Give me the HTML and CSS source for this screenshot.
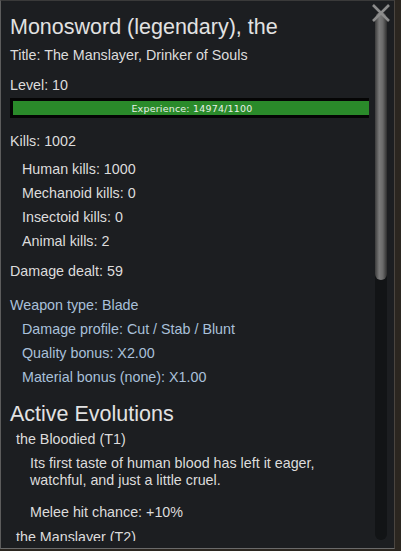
FILE: index.html
```html
<!DOCTYPE html>
<html>
<head>
<meta charset="utf-8">
<link rel="stylesheet" href="styles.css">
</head>
<body>
<div class="window">
  <div class="content">
    <div class="scroll">
      <h1 class="name">Monosword (legendary), the</h1>
      <div class="line title">Title: The Manslayer, Drinker of Souls</div>
      <div class="line level">Level: 10</div>
      <div class="xpbar"><div class="xpfill"><span>Experience: 14974/1100</span></div></div>
      <div class="line kills">Kills: 1002</div>
      <div class="line sub">Human kills: 1000</div>
      <div class="line sub">Mechanoid kills: 0</div>
      <div class="line sub">Insectoid kills: 0</div>
      <div class="line sub">Animal kills: 2</div>
      <div class="line dmg">Damage dealt: 59</div>
      <div class="line blue wtype">Weapon type: Blade</div>
      <div class="line blue sub">Damage profile: Cut / Stab / Blunt</div>
      <div class="line blue sub">Quality bonus: X2.00</div>
      <div class="line blue sub">Material bonus (none): X1.00</div>
      <h2 class="evo-head">Active Evolutions</h2>
      <div class="evo-name">the Bloodied (T1)</div>
      <div class="evo-desc">Its first taste of human blood has left it eager, watchful, and just a little cruel.</div>
      <div class="evo-stat">Melee hit chance: +10%</div>
      <div class="evo-name next">the Manslayer (T2)</div>
    </div>
    <div class="scrollbar"><div class="thumb"></div></div>
  </div>
  <svg class="close" width="20" height="20" viewBox="0 0 20 20"><path d="M2 2 L18 18 M18 2 L2 18" stroke="#8c8c8c" stroke-width="2.6" fill="none"/></svg>
</div>
</body>
</html>
```
FILE: styles.css
```css
html, body {
  margin: 0;
  padding: 0;
  background: #2b2620;
  width: 401px;
  height: 551px;
  overflow: hidden;
}
body {
  font-family: "Liberation Sans", Arial, sans-serif;
  color: #dcdcdc;
}
.window {
  position: relative;
  width: 395px;
  height: 549px;
  background: #1c1e21;
  border-left: 1px solid #5c5c5c;
  border-top: 1px solid #3a3a3a;
  border-bottom: 1px solid #6a6a6a;
  box-sizing: border-box;
  border-right: 1px solid #4a4540;
}
.content {
  display: flex;
  height: 540px;
}
.scroll {
  flex: 1;
  overflow: hidden;
  padding-left: 9px;
  padding-top: 13px;
}
.name {
  margin: 0;
  font-weight: normal;
  font-size: 21.5px;
  line-height: 26px;
  color: #e2e2e2;
}
.line {
  font-size: 14.3px;
  line-height: 24px;
}
.title { margin-top: 3px; }
.level { margin-top: 6px; }
.xpbar {
  margin-top: 1px;
  width: 364px;
  height: 20px;
  background: #050505;
  box-sizing: border-box;
  padding: 3px;
}
.xpfill {
  height: 14px;
  background: #2a8a2a;
  display: flex;
  align-items: center;
  justify-content: center;
}
.xpfill span {
  font-family: "DejaVu Sans", sans-serif;
  font-size: 9.5px;
  color: #e8f0e8;
  letter-spacing: 0.2px;
}
.kills { margin-top: 11px; margin-bottom: 4px; }
.sub { padding-left: 12px; }
.dmg { margin-top: 6px; }
.blue { color: #a9c0da; }
.wtype { margin-top: 10px; }
.evo-head {
  margin: 12px 0 0 0;
  font-weight: normal;
  font-size: 21.5px;
  line-height: 26px;
  color: #e2e2e2;
}
.evo-name {
  font-size: 14.3px;
  line-height: 24px;
  padding-left: 6px;
  margin-top: 0;
}
.evo-name.next { margin-top: 1px; }
.evo-desc {
  font-size: 14.3px;
  line-height: 17px;
  padding-left: 20px;
  margin-top: 4px;
  width: 300px;
}
.evo-stat {
  font-size: 14.3px;
  line-height: 24px;
  padding-left: 20px;
  margin-top: 11px;
}
.scrollbar {
  width: 12px;
  margin: 11px 7px 0 6px;
  height: 528px;
  background: #121416;
  border-radius: 6px;
  overflow: hidden;
}
.thumb {
  height: 268px;
  border-radius: 6px;
  background: linear-gradient(to right, #3c3c3c, #7a7a7a 35%, #6a6a6a 65%, #2e2e2e);
}
.close {
  position: absolute;
  right: 3px;
  top: 2px;
}
```
